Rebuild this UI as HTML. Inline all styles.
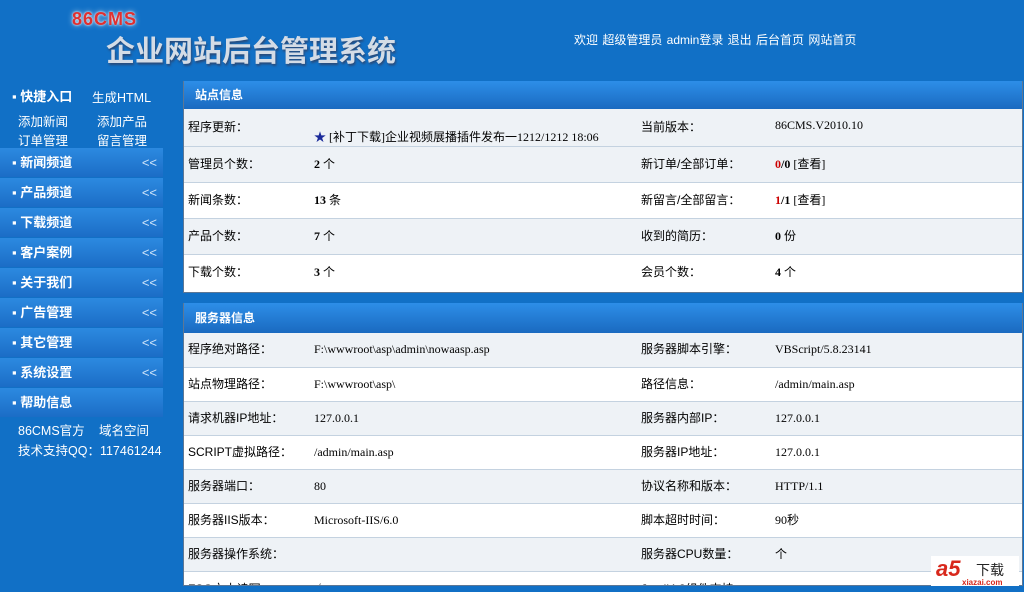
<!DOCTYPE html>
<html><head><meta charset="utf-8"><style>
*{margin:0;padding:0;box-sizing:border-box}
html{overflow:hidden;width:1024px;height:592px}
body{width:1024px;height:592px;overflow:hidden;background:#1170c6;font-family:"Liberation Sans","Noto Sans CJK SC",sans-serif;font-size:12px;color:#000;position:relative}
.a{position:absolute;white-space:nowrap}
.logo{left:72px;top:9px;color:#e03030;font:bold 18px "Liberation Sans",sans-serif;letter-spacing:1px;text-shadow:0 0 2px #fff,0 0 6px #cde}
.title{left:106px;top:28px;font:bold 29px "Noto Sans CJK SC",sans-serif;color:#d4dce6;text-shadow:1px 2px 2px #2a4a78}
.top{left:574px;top:31px;color:#fff;font-size:12px;word-spacing:1px}
.sw{color:#fff;font-size:12.5px}
.qk{left:12px;top:86px;color:#fff;font-weight:bold;font-size:13px}
.menu{position:absolute;left:0;width:163px;height:29px;background:linear-gradient(#2c8ae0,#1b6dc6);color:#fff;font-weight:bold;font-size:13px;line-height:29px;padding-left:12px}
.menu span{position:absolute;right:6px;top:0;font-weight:normal;color:#cfe4fa;font-size:13px}
.panel{position:absolute;left:183px;width:840px;background:#fff;border:1px solid #5d7795;border-top:none;overflow:hidden}
.ph{height:28px;background:linear-gradient(#2d8ee8,#1a6ac0);color:#fff;font-weight:bold;line-height:28px;padding-left:11px;font-size:12px}
.row{position:relative;border-top:1px solid #c4d2e0;font-size:12px}
.row.g{background:#eef2f6}
.row div{position:absolute;top:0}
.l1{left:4px}.v1{left:130px;font-family:"Liberation Serif","Noto Sans CJK SC",serif}.l2{left:457px}.v2{left:591px;font-family:"Liberation Serif","Noto Sans CJK SC",serif}
b.r{color:#c00}
</style></head><body>
<div class="a logo">86CMS</div>
<div class="a title">企业网站后台管理系统</div>
<div class="a top">欢迎 超级管理员 admin登录 退出 后台首页 网站首页</div>
<div class="a qk">▪ 快捷入口</div>
<div class="a sw" style="left:92px;top:87px">生成HTML</div>
<div class="a sw" style="left:18px;top:111px">添加新闻</div>
<div class="a sw" style="left:97px;top:111px">添加产品</div>
<div class="a sw" style="left:18px;top:130px">订单管理</div>
<div class="a sw" style="left:97px;top:130px">留言管理</div>
<div class="menu" style="top:148px">▪ 新闻频道<span>&lt;&lt;</span></div>
<div class="menu" style="top:178px">▪ 产品频道<span>&lt;&lt;</span></div>
<div class="menu" style="top:208px">▪ 下载频道<span>&lt;&lt;</span></div>
<div class="menu" style="top:238px">▪ 客户案例<span>&lt;&lt;</span></div>
<div class="menu" style="top:268px">▪ 关于我们<span>&lt;&lt;</span></div>
<div class="menu" style="top:298px">▪ 广告管理<span>&lt;&lt;</span></div>
<div class="menu" style="top:328px">▪ 其它管理<span>&lt;&lt;</span></div>
<div class="menu" style="top:358px">▪ 系统设置<span>&lt;&lt;</span></div>
<div class="menu" style="top:388px">▪ 帮助信息</div>
<div class="a sw" style="left:18px;top:420px">86CMS官方</div>
<div class="a sw" style="left:99px;top:420px">域名空间</div>
<div class="a sw" style="left:18px;top:440px">技术支持QQ：117461244</div>

<div class="panel" style="top:81px;height:212px">
<div class="ph">站点信息</div>
<div class="row g" style="height:37px;border-top:none"><div class="l1" style="top:9px">程序更新：</div><div class="v1" style="top:19px;left:130px"><span style="color:#1a2a9a">★</span> [补丁下载]企业视频展播插件发布一1212/1212 18:06</div><div class="l2" style="top:9px">当前版本：</div><div class="v2" style="top:9px">86CMS.V2010.10</div></div>
<div class="row g" style="height:36px;line-height:34px"><div class="l1">管理员个数：</div><div class="v1"><b>2</b> 个</div><div class="l2">新订单/全部订单：</div><div class="v2"><b class="r">0</b><b>/0</b> [查看]</div></div>
<div class="row" style="height:36px;line-height:34px"><div class="l1">新闻条数：</div><div class="v1"><b>13</b> 条</div><div class="l2">新留言/全部留言：</div><div class="v2"><b class="r">1</b><b>/1</b> [查看]</div></div>
<div class="row g" style="height:36px;line-height:34px"><div class="l1">产品个数：</div><div class="v1"><b>7</b> 个</div><div class="l2">收到的简历：</div><div class="v2"><b>0</b> 份</div></div>
<div class="row" style="height:36px;line-height:34px"><div class="l1">下载个数：</div><div class="v1"><b>3</b> 个</div><div class="l2">会员个数：</div><div class="v2"><b>4</b> 个</div></div>
</div>

<div class="panel" style="top:303px;height:283px">
<div class="ph" style="height:30px;line-height:30px">服务器信息</div>
<div class="row g" style="height:34px;line-height:32px;border-top:none"><div class="l1">程序绝对路径：</div><div class="v1">F:\wwwroot\asp\admin\nowaasp.asp</div><div class="l2">服务器脚本引擎：</div><div class="v2">VBScript/5.8.23141</div></div>
<div class="row" style="height:34px;line-height:32px"><div class="l1">站点物理路径：</div><div class="v1">F:\wwwroot\asp\</div><div class="l2">路径信息：</div><div class="v2">/admin/main.asp</div></div>
<div class="row g" style="height:34px;line-height:32px"><div class="l1">请求机器IP地址：</div><div class="v1">127.0.0.1</div><div class="l2">服务器内部IP：</div><div class="v2">127.0.0.1</div></div>
<div class="row" style="height:34px;line-height:32px"><div class="l1">SCRIPT虚拟路径：</div><div class="v1">/admin/main.asp</div><div class="l2">服务器IP地址：</div><div class="v2">127.0.0.1</div></div>
<div class="row g" style="height:34px;line-height:32px"><div class="l1">服务器端口：</div><div class="v1">80</div><div class="l2">协议名称和版本：</div><div class="v2">HTTP/1.1</div></div>
<div class="row" style="height:34px;line-height:32px"><div class="l1">服务器IIS版本：</div><div class="v1">Microsoft-IIS/6.0</div><div class="l2">脚本超时时间：</div><div class="v2">90秒</div></div>
<div class="row g" style="height:34px;line-height:32px"><div class="l1">服务器操作系统：</div><div class="v1"></div><div class="l2">服务器CPU数量：</div><div class="v2">个</div></div>
<div class="row" style="height:34px;line-height:14px"><div class="l1" style="top:10px">FSO文本读写：</div><div class="v1" style="top:10px">√</div><div class="l2" style="top:10px">Jmail4.3组件支持：</div><div class="v2" style="top:10px;color:#999">×</div></div>
</div>
<div class="a" style="left:0;top:586px;width:1024px;height:6px;background:#1170c6"></div>
<div class="a" style="left:931px;top:556px;width:88px;height:30px;background:#fff"></div>
<div class="a" style="left:936px;top:556px;font:bold italic 22px 'Liberation Sans',sans-serif;color:#d8281c">a5</div>
<div class="a" style="left:976px;top:560px;font-size:14px;color:#222">下载</div>
<div class="a" style="left:962px;top:578px;font:bold 8px 'Liberation Sans',sans-serif;color:#d8281c">xiazai.com</div>
</body></html>
